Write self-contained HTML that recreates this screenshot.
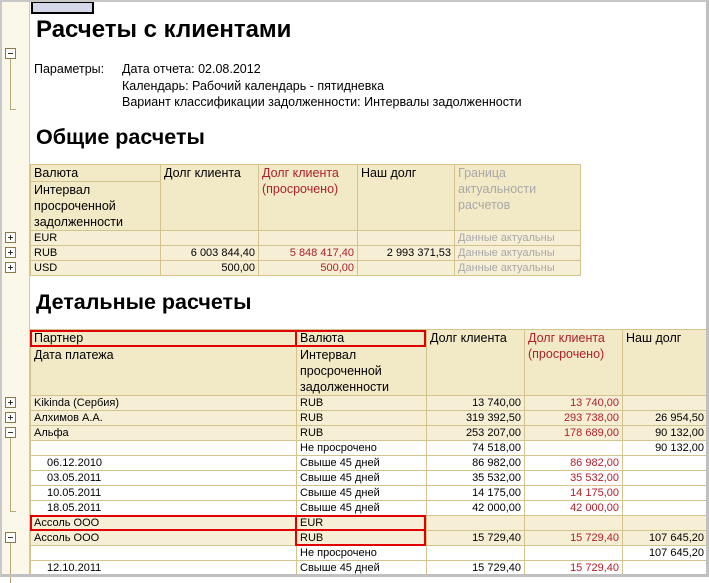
<!DOCTYPE html>
<html><head><meta charset="utf-8"><style>
*{margin:0;padding:0;box-sizing:border-box}
body{width:709px;height:577px;overflow:hidden;background:#fff;font-family:"Liberation Sans",Arial,sans-serif;position:relative}
#frame{position:absolute;left:0;top:0;width:709px;height:577px;border:2px solid #c8c8c8;border-right:3px solid #c0c0c0;border-bottom:3px solid #c0c0c0}
#gut{position:absolute;left:2px;top:0;width:28px;height:577px;background:#fbf8ea;border-right:1px solid #d6ca9c}
.a{position:absolute;white-space:nowrap}
.pm{position:absolute;left:5px;width:11px;height:11px;border:1px solid #8a7a4a;background:#fff}
.pm:before{content:"";position:absolute;left:2px;top:4px;width:5px;height:1px;background:#333}
.pl:after{content:"";position:absolute;left:4px;top:2px;width:1px;height:5px;background:#333}
.vl{position:absolute;left:10px;width:6px;border-left:1px solid #b8a878;border-bottom:1px solid #b8a878}
table{position:absolute;border-collapse:collapse;table-layout:fixed}
td{border:1px solid #d3c38d;font-size:11px;padding:1px 3px 0;height:15px;line-height:13px;white-space:nowrap;overflow:hidden;vertical-align:top}
.h td{background:#f2e9c6;font-size:12.5px;line-height:16px;padding-top:0}
.g td{background:#f6efd6}
.w td{background:#fff}
.r{text-align:right}
.red{color:#b0202c}
.gr{color:#a8a8a8}
.box{position:absolute;border:2px solid #e00000}
</style></head><body>
<div id="gut"></div>
<div class="a" style="left:31px;top:2px;width:63px;height:12px;background:#d4d8e8;border:2px solid #000;border-top-width:1px"></div>
<div class="a" style="left:36px;top:16px;font-size:24px;font-weight:bold">Расчеты с клиентами</div>
<div class="pm" style="top:48px"></div><div class="vl" style="top:59px;height:51px"></div>
<div class="a" style="left:34px;top:61px;font-size:12.5px;line-height:16.5px">Параметры:</div>
<div class="a" style="left:122px;top:61px;font-size:12.5px;line-height:16.5px">Дата отчета: 02.08.2012<br>Календарь: Рабочий календарь - пятидневка<br>Вариант классификации задолженности: Интервалы задолженности</div>
<div class="a" style="left:36px;top:125px;font-size:21.5px;font-weight:bold">Общие расчеты</div>
<table style="left:30px;top:164px;width:550px">
<colgroup><col style="width:130px"><col style="width:98px"><col style="width:99px"><col style="width:97px"><col style="width:126px"></colgroup>
<tr class="h"><td style="height:17px">Валюта</td><td rowspan="2">Долг клиента</td><td rowspan="2" class="red">Долг клиента<br>(просрочено)</td><td rowspan="2">Наш долг</td><td rowspan="2" class="gr">Граница<br>актуальности<br>расчетов</td></tr>
<tr class="h"><td style="height:49px">Интервал<br>просроченной<br>задолженности</td></tr>
<tr class="g"><td>EUR</td><td></td><td></td><td></td><td class="gr">Данные актуальны</td></tr>
<tr class="g"><td>RUB</td><td class="r">6 003 844,40</td><td class="r red">5 848 417,40</td><td class="r">2 993 371,53</td><td class="gr">Данные актуальны</td></tr>
<tr class="g"><td>USD</td><td class="r">500,00</td><td class="r red">500,00</td><td></td><td class="gr">Данные актуальны</td></tr>
</table>
<div class="pm pl" style="top:232px"></div><div class="pm pl" style="top:247px"></div><div class="pm pl" style="top:262px"></div>
<div class="a" style="left:36px;top:290px;font-size:21.5px;font-weight:bold">Детальные расчеты</div>
<table style="left:30px;top:329px;width:677px">
<colgroup><col style="width:266px"><col style="width:130px"><col style="width:98px"><col style="width:98px"><col style="width:85px"></colgroup>
<tr class="h"><td style="height:17px">Партнер</td><td>Валюта</td><td rowspan="2">Долг клиента</td><td rowspan="2" class="red">Долг клиента<br>(просрочено)</td><td rowspan="2">Наш долг</td></tr>
<tr class="h"><td style="height:49px">Дата платежа</td><td>Интервал<br>просроченной<br>задолженности</td></tr>
<tr class="g"><td>Kikinda (Сербия)</td><td>RUB</td><td class="r">13 740,00</td><td class="r red">13 740,00</td><td></td></tr>
<tr class="g"><td>Алхимов А.А.</td><td>RUB</td><td class="r">319 392,50</td><td class="r red">293 738,00</td><td class="r">26 954,50</td></tr>
<tr class="g"><td>Альфа</td><td>RUB</td><td class="r">253 207,00</td><td class="r red">178 689,00</td><td class="r">90 132,00</td></tr>
<tr class="w"><td></td><td>Не просрочено</td><td class="r">74 518,00</td><td></td><td class="r">90 132,00</td></tr>
<tr class="w"><td style="padding-left:16px">06.12.2010</td><td>Свыше 45 дней</td><td class="r">86 982,00</td><td class="r red">86 982,00</td><td></td></tr>
<tr class="w"><td style="padding-left:16px">03.05.2011</td><td>Свыше 45 дней</td><td class="r">35 532,00</td><td class="r red">35 532,00</td><td></td></tr>
<tr class="w"><td style="padding-left:16px">10.05.2011</td><td>Свыше 45 дней</td><td class="r">14 175,00</td><td class="r red">14 175,00</td><td></td></tr>
<tr class="w"><td style="padding-left:16px">18.05.2011</td><td>Свыше 45 дней</td><td class="r">42 000,00</td><td class="r red">42 000,00</td><td></td></tr>
<tr class="g"><td>Ассоль ООО</td><td>EUR</td><td></td><td></td><td></td></tr>
<tr class="g"><td>Ассоль ООО</td><td>RUB</td><td class="r">15 729,40</td><td class="r red">15 729,40</td><td class="r">107 645,20</td></tr>
<tr class="w"><td></td><td>Не просрочено</td><td></td><td></td><td class="r">107 645,20</td></tr>
<tr class="w"><td style="padding-left:16px">12.10.2011</td><td>Свыше 45 дней</td><td class="r">15 729,40</td><td class="r red">15 729,40</td><td></td></tr>
</table>
<div class="box" style="left:30px;top:330px;width:267px;height:17px"></div>
<div class="box" style="left:295px;top:330px;width:131px;height:17px"></div>
<div class="box" style="left:30px;top:515px;width:267px;height:16px"></div>
<div class="box" style="left:295px;top:515px;width:131px;height:16px"></div>
<div class="box" style="left:295px;top:529px;width:131px;height:17px"></div>
<div class="pm pl" style="top:397px"></div><div class="pm pl" style="top:412px"></div>
<div class="pm" style="top:427px"></div><div class="vl" style="top:438px;height:74px"></div>
<div class="pm" style="top:532px"></div><div class="vl" style="top:543px;height:40px;border-bottom:none"></div>
<div id="frame"></div>
</body></html>
